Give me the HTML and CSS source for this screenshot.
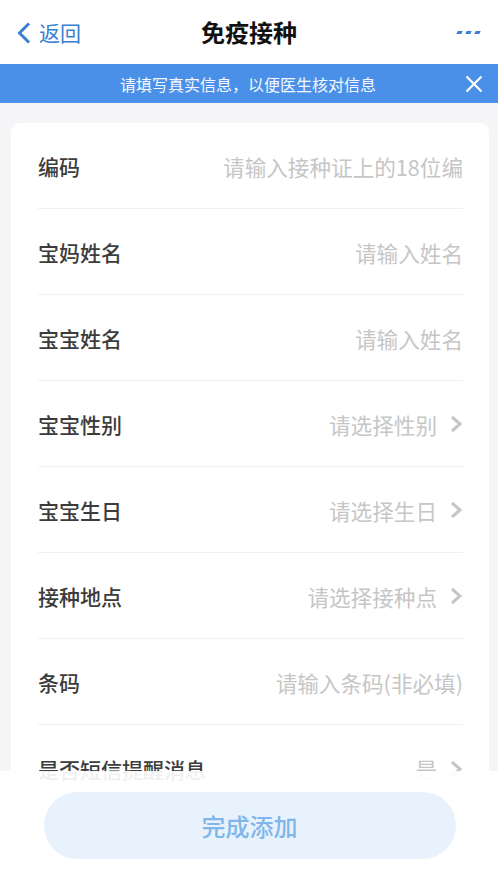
FILE: index.html
```html
<!DOCTYPE html>
<html lang="zh-CN">
<head>
<meta charset="utf-8">
<title>免疫接种</title>
<link rel="stylesheet" href="styles.css">
</head>
<body>
<header class="nav">
  <div class="nav-back">
    <svg class="back-icon" width="14" height="22" viewBox="0 0 14 22"><polyline points="12,1.5 2.5,11 12,20.5" fill="none" stroke="#3a80d2" stroke-width="3" stroke-linejoin="miter"/></svg>
    <span class="back-text">返回</span>
  </div>
  <h1 class="nav-title">免疫接种</h1>
  <div class="nav-more"><i></i><i></i><i></i></div>
</header>
<div class="notice">
  <span class="notice-text">请填写真实信息，以便医生核对信息</span>
  <svg class="notice-close" width="18" height="18" viewBox="0 0 18 18"><path d="M1.5 1.5 L16.5 16.5 M16.5 1.5 L1.5 16.5" stroke="#fff" stroke-width="2.2" fill="none"/></svg>
</div>
<main class="page">
  <section class="card">
    <div class="row"><span class="label">编码</span><span class="value">请输入接种证上的18位编</span></div>
    <div class="row"><span class="label">宝妈姓名</span><span class="value">请输入姓名</span></div>
    <div class="row"><span class="label">宝宝姓名</span><span class="value">请输入姓名</span></div>
    <div class="row"><span class="label">宝宝性别</span><span class="value">请选择性别</span><svg class="arrow" width="13" height="18" viewBox="0 0 13 18"><polyline points="2,2 10,9 2,16" fill="none" stroke="#c6c6c6" stroke-width="3"/></svg></div>
    <div class="row"><span class="label">宝宝生日</span><span class="value">请选择生日</span><svg class="arrow" width="13" height="18" viewBox="0 0 13 18"><polyline points="2,2 10,9 2,16" fill="none" stroke="#c6c6c6" stroke-width="3"/></svg></div>
    <div class="row"><span class="label">接种地点</span><span class="value">请选择接种点</span><svg class="arrow" width="13" height="18" viewBox="0 0 13 18"><polyline points="2,2 10,9 2,16" fill="none" stroke="#c6c6c6" stroke-width="3"/></svg></div>
    <div class="row"><span class="label">条码</span><span class="value">请输入条码(非必填)</span></div>
    <div class="row last"><span class="label">是否短信提醒消息</span><span class="value">是</span><svg class="arrow" width="13" height="18" viewBox="0 0 13 18"><polyline points="2,2 10,9 2,16" fill="none" stroke="#c6c6c6" stroke-width="3"/></svg></div>
  </section>
</main>
<footer class="bottom-bar">
  <button class="submit" type="button">完成添加</button>
</footer>
</body>
</html>
```
FILE: styles.css
```css
* { box-sizing: border-box; }
html, body {
  margin: 0;
  padding: 0;
  background: #f5f5f7;
  font-family: "Noto Sans CJK SC", "Noto Sans", sans-serif;
}
.nav {
  height: 64px;
  background: #fff;
  display: flex;
  align-items: center;
  justify-content: space-between;
  padding: 0 18px 0 17px;
  position: relative;
}
.nav-back {
  display: flex;
  align-items: center;
  gap: 8px;
  width: 100px;
  padding-top: 1px;
}
.back-icon { display: block; }
.back-text {
  color: #3a80d2;
  font-size: 21px;
  line-height: 1;
}
.nav-title {
  margin: 0;
  font-size: 24px;
  font-weight: 700;
  color: #111;
  line-height: 1;
  position: absolute;
  left: 0;
  right: 0;
  text-align: center;
  pointer-events: none;
}
.nav-more {
  display: flex;
  gap: 4px;
  width: 100px;
  justify-content: flex-end;
}
.nav-more i {
  display: block;
  width: 5px;
  height: 3px;
  background: #3a80d2;
  transform: skewX(-25deg);
}
.notice {
  height: 39px;
  background: #4a90e8;
  display: flex;
  align-items: center;
  justify-content: center;
  position: relative;
}
.notice-text {
  color: #f4f8fe;
  font-size: 16px;
  line-height: 1;
  padding-right: 2px;
}
.notice-close {
  position: absolute;
  right: 15px;
  top: 11px;
}
.page {
  padding: 20px 9px 120px 11px;
}
.card {
  background: #fff;
  border-radius: 9px;
  padding: 0 26px 0 27px;
}
.row {
  height: 86px;
  display: flex;
  align-items: center;
  border-bottom: 1px solid #f0f0f0;
  padding-top: 1px;
}
.row.last { border-bottom: none; }
.label {
  font-size: 21px;
  color: #3c3c3c;
  font-weight: 500;
  flex: none;
}
.value {
  margin-left: auto;
  font-size: 21.6px;
  color: #c6c6c6;
  white-space: nowrap;
}
.arrow {
  margin-left: 13px;
  flex: none;
}
.bottom-bar {
  position: fixed;
  left: 0;
  right: 0;
  bottom: 0;
  height: 100px;
  background: rgba(255, 255, 255, 0.92);
  display: flex;
  justify-content: center;
  padding-top: 21px;
}
.submit {
  width: 412px;
  height: 67px;
  border: none;
  border-radius: 34px;
  background: #e8f2fd;
  color: #80b6ea;
  font-family: "Noto Sans CJK SC", "Noto Sans", sans-serif;
  font-size: 24px;
  font-weight: 500;
  margin-left: 1px;
}
```
